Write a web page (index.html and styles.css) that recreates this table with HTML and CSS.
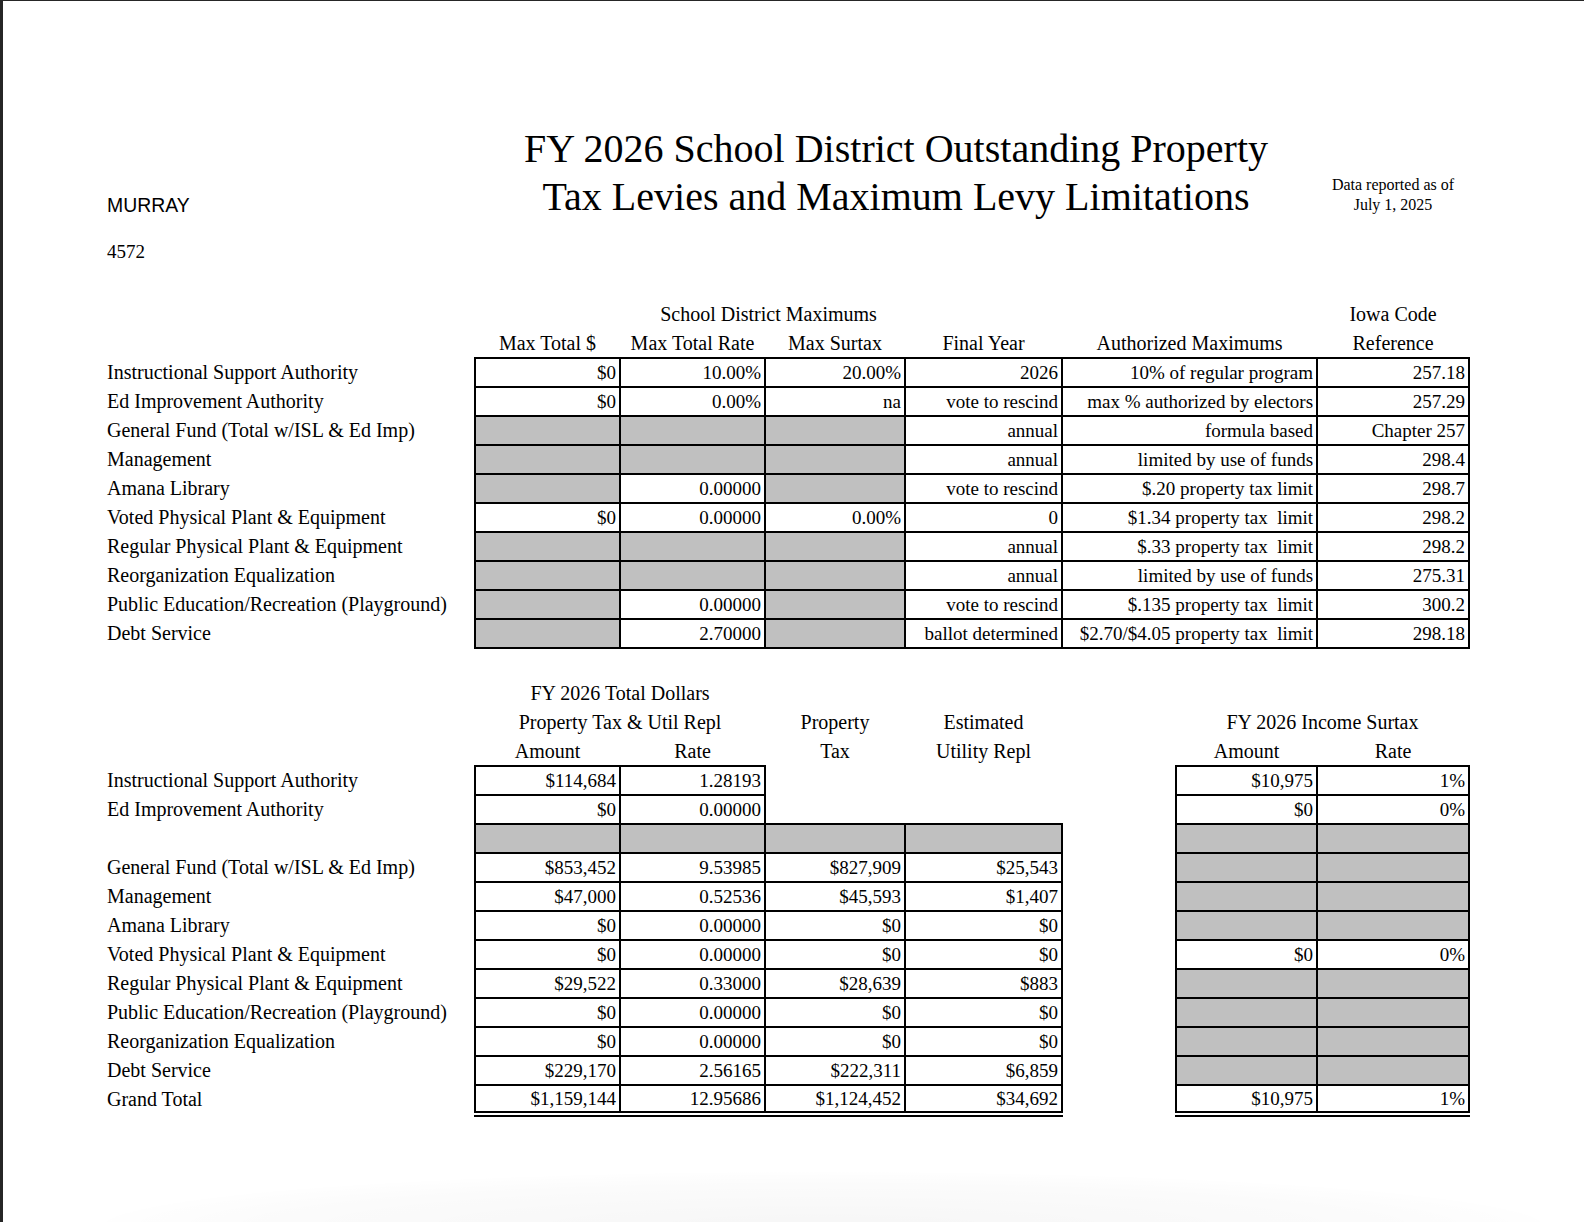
FILE: index.html
```html
<!DOCTYPE html>
<html lang="en">
<head>
<meta charset="utf-8">
<title>FY 2026 School District Outstanding Property Tax Levies and Maximum Levy Limitations</title>
<link rel="stylesheet" href="styles.css">
</head>
<body>
<div class="page">
  <header class="head">
    <div class="district">
      <div class="name">MURRAY</div>
      <div class="code">4572</div>
    </div>
    <h1 class="title">FY 2026 School District Outstanding Property<br>Tax Levies and Maximum Levy Limitations</h1>
    <div class="asof">Data reported as of<br>July 1, 2025</div>
  </header>

  <table class="grid top">
    <colgroup>
      <col class="w-lbl"><col class="w-c1"><col class="w-c2"><col class="w-c3"><col class="w-c4"><col class="w-gap"><col class="w-c5"><col class="w-c6">
    </colgroup>
    <tr class="hr">
      <td></td><td class="h" colspan="4">School District Maximums</td><td colspan="2"></td><td class="h">Iowa Code</td>
    </tr>
    <tr class="hr">
      <td></td><td class="h">Max Total $</td><td class="h">Max Total Rate</td><td class="h">Max Surtax</td><td class="h">Final Year</td><td class="h" colspan="2">Authorized Maximums</td><td class="h">Reference</td>
    </tr>
    <tr>
      <td class="lbl">Instructional Support Authority</td><td class="c">$0</td><td class="c">10.00%</td><td class="c">20.00%</td><td class="c">2026</td><td class="c" colspan="2">10% of regular program</td><td class="c">257.18</td>
    </tr>
    <tr>
      <td class="lbl">Ed Improvement Authority</td><td class="c">$0</td><td class="c">0.00%</td><td class="c">na</td><td class="c">vote to rescind</td><td class="c" colspan="2">max % authorized by electors</td><td class="c">257.29</td>
    </tr>
    <tr>
      <td class="lbl">General Fund (Total w/ISL &amp; Ed Imp)</td><td class="c g"></td><td class="c g"></td><td class="c g"></td><td class="c">annual</td><td class="c" colspan="2">formula based</td><td class="c">Chapter 257</td>
    </tr>
    <tr>
      <td class="lbl">Management</td><td class="c g"></td><td class="c g"></td><td class="c g"></td><td class="c">annual</td><td class="c" colspan="2">limited by use of funds</td><td class="c">298.4</td>
    </tr>
    <tr>
      <td class="lbl">Amana Library</td><td class="c g"></td><td class="c">0.00000</td><td class="c g"></td><td class="c">vote to rescind</td><td class="c" colspan="2">$.20 property tax limit</td><td class="c">298.7</td>
    </tr>
    <tr>
      <td class="lbl">Voted Physical Plant &amp; Equipment</td><td class="c">$0</td><td class="c">0.00000</td><td class="c">0.00%</td><td class="c">0</td><td class="c" colspan="2">$1.34 property tax&nbsp; limit</td><td class="c">298.2</td>
    </tr>
    <tr>
      <td class="lbl">Regular Physical Plant &amp; Equipment</td><td class="c g"></td><td class="c g"></td><td class="c g"></td><td class="c">annual</td><td class="c" colspan="2">$.33 property tax&nbsp; limit</td><td class="c">298.2</td>
    </tr>
    <tr>
      <td class="lbl">Reorganization Equalization</td><td class="c g"></td><td class="c g"></td><td class="c g"></td><td class="c">annual</td><td class="c" colspan="2">limited by use of funds</td><td class="c">275.31</td>
    </tr>
    <tr>
      <td class="lbl">Public Education/Recreation (Playground)</td><td class="c g"></td><td class="c">0.00000</td><td class="c g"></td><td class="c">vote to rescind</td><td class="c" colspan="2">$.135 property tax&nbsp; limit</td><td class="c">300.2</td>
    </tr>
    <tr>
      <td class="lbl">Debt Service</td><td class="c g"></td><td class="c">2.70000</td><td class="c g"></td><td class="c">ballot determined</td><td class="c" colspan="2">$2.70/$4.05 property tax&nbsp; limit</td><td class="c">298.18</td>
    </tr>
  </table>

  <table class="grid bottom">
    <colgroup>
      <col class="w-lbl"><col class="w-c1"><col class="w-c2"><col class="w-c3"><col class="w-c4"><col class="w-gap"><col class="w-c5"><col class="w-c6">
    </colgroup>
    <tr class="hr">
      <td></td><td class="h" colspan="2">FY 2026 Total Dollars</td><td></td><td></td><td></td><td></td><td></td>
    </tr>
    <tr class="hr">
      <td></td><td class="h" colspan="2">Property Tax &amp; Util Repl</td><td class="h">Property</td><td class="h">Estimated</td><td></td><td class="h" colspan="2">FY 2026 Income Surtax</td>
    </tr>
    <tr class="hr">
      <td></td><td class="h">Amount</td><td class="h">Rate</td><td class="h">Tax</td><td class="h">Utility Repl</td><td></td><td class="h">Amount</td><td class="h">Rate</td>
    </tr>
    <tr>
      <td class="lbl">Instructional Support Authority</td><td class="c">$114,684</td><td class="c">1.28193</td><td></td><td></td><td></td><td class="c">$10,975</td><td class="c">1%</td>
    </tr>
    <tr>
      <td class="lbl">Ed Improvement Authority</td><td class="c">$0</td><td class="c">0.00000</td><td></td><td></td><td></td><td class="c">$0</td><td class="c">0%</td>
    </tr>
    <tr>
      <td class="lbl"></td><td class="c g"></td><td class="c g"></td><td class="c g"></td><td class="c g"></td><td></td><td class="c g"></td><td class="c g"></td>
    </tr>
    <tr>
      <td class="lbl">General Fund (Total w/ISL &amp; Ed Imp)</td><td class="c">$853,452</td><td class="c">9.53985</td><td class="c">$827,909</td><td class="c">$25,543</td><td></td><td class="c g"></td><td class="c g"></td>
    </tr>
    <tr>
      <td class="lbl">Management</td><td class="c">$47,000</td><td class="c">0.52536</td><td class="c">$45,593</td><td class="c">$1,407</td><td></td><td class="c g"></td><td class="c g"></td>
    </tr>
    <tr>
      <td class="lbl">Amana Library</td><td class="c">$0</td><td class="c">0.00000</td><td class="c">$0</td><td class="c">$0</td><td></td><td class="c g"></td><td class="c g"></td>
    </tr>
    <tr>
      <td class="lbl">Voted Physical Plant &amp; Equipment</td><td class="c">$0</td><td class="c">0.00000</td><td class="c">$0</td><td class="c">$0</td><td></td><td class="c">$0</td><td class="c">0%</td>
    </tr>
    <tr>
      <td class="lbl">Regular Physical Plant &amp; Equipment</td><td class="c">$29,522</td><td class="c">0.33000</td><td class="c">$28,639</td><td class="c">$883</td><td></td><td class="c g"></td><td class="c g"></td>
    </tr>
    <tr>
      <td class="lbl">Public Education/Recreation (Playground)</td><td class="c">$0</td><td class="c">0.00000</td><td class="c">$0</td><td class="c">$0</td><td></td><td class="c g"></td><td class="c g"></td>
    </tr>
    <tr>
      <td class="lbl">Reorganization Equalization</td><td class="c">$0</td><td class="c">0.00000</td><td class="c">$0</td><td class="c">$0</td><td></td><td class="c g"></td><td class="c g"></td>
    </tr>
    <tr>
      <td class="lbl">Debt Service</td><td class="c">$229,170</td><td class="c">2.56165</td><td class="c">$222,311</td><td class="c">$6,859</td><td></td><td class="c g"></td><td class="c g"></td>
    </tr>
    <tr class="total">
      <td class="lbl">Grand Total</td><td class="c">$1,159,144</td><td class="c">12.95686</td><td class="c">$1,124,452</td><td class="c">$34,692</td><td></td><td class="c">$10,975</td><td class="c">1%</td>
    </tr>
  </table>
</div>
</body>
</html>
```

FILE: styles.css
```css
html, body {
  margin: 0;
  padding: 0;
  background: #ffffff;
}

.page {
  position: relative;
  box-sizing: border-box;
  min-height: 1222px;
  border-left: 3px solid #262626;
  border-top: 1px solid #262626;
  padding: 124px 0 0 104px;
  color: #000;
  font-family: "Liberation Serif", "Times New Roman", serif;
  overflow: hidden;
}

.page::after {
  content: "";
  position: absolute;
  left: 100px;
  right: 40px;
  bottom: -60px;
  height: 110px;
  border-radius: 50%;
  background: radial-gradient(ellipse at center, rgba(0,0,0,0.035) 0%, rgba(0,0,0,0.015) 55%, rgba(0,0,0,0) 75%);
  pointer-events: none;
}

/* header */
.head {
  display: grid;
  grid-template-columns: 368px 842px 152px;
  height: 175px;
}

.district .name {
  margin-top: 69px;
  font-family: "Liberation Sans", Arial, sans-serif;
  font-size: 19.4px;
  line-height: 22px;
}

.district .code {
  margin-top: 25px;
  font-size: 19px;
  line-height: 22px;
}

.title {
  margin: 0;
  font-weight: normal;
  font-size: 40px;
  line-height: 47.5px;
  text-align: center;
}

.asof {
  margin-top: 50px;
  font-size: 16px;
  line-height: 20px;
  text-align: center;
}

/* tables */
.grid {
  border-collapse: collapse;
  table-layout: fixed;
  width: 1362px;
  font-size: 20px;
  line-height: 23px;
}

.grid.bottom {
  margin-top: 30px;
}

.w-lbl { width: 368px; }
.w-c1 { width: 145px; }
.w-c2 { width: 145px; }
.w-c3 { width: 140px; }
.w-c4 { width: 157px; }
.w-gap { width: 114px; }
.w-c5 { width: 141px; }
.w-c6 { width: 152px; }

.grid tr {
  height: 29px;
}

.grid td {
  padding: 0;
  white-space: nowrap;
  vertical-align: middle;
}

.grid td.lbl {
  text-align: left;
}

.grid td.h {
  text-align: center;
}

.grid td.c {
  border: 2px solid #000;
  text-align: right;
  padding-right: 3px;
  font-size: 19px;
}

.grid td.g {
  background: #c0c0c0;
}

.grid tr.total td.c {
  border-bottom: 6px double #000;
}
```
